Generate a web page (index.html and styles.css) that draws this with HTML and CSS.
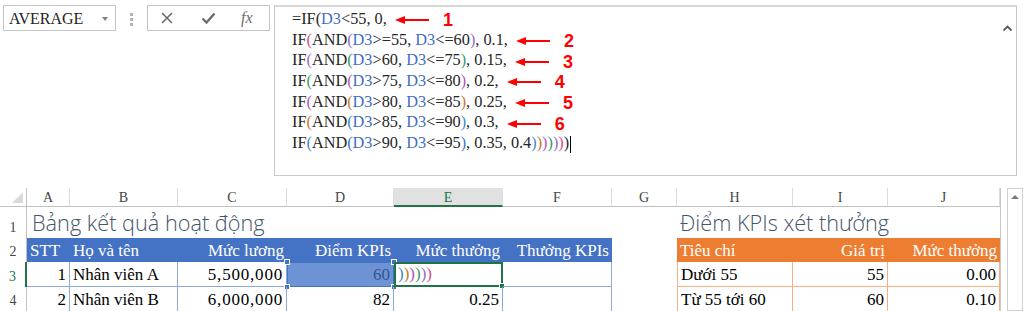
FILE: index.html
```html
<!DOCTYPE html>
<html>
<head>
<meta charset="utf-8">
<link rel="stylesheet" href="styles.css">
</head>
<body>

<!-- formula bar -->
<div class="topbar">
  <div class="namebox"><span>AVERAGE</span><span class="caret"></span></div>
  <div class="grip"><i></i><i></i><i></i></div>
  <div class="fnbox">
    <svg class="ic-x" width="12" height="12" viewBox="0 0 12 12"><path d="M1 1 L11 11 M11 1 L1 11" stroke="#6d6d6d" stroke-width="1.6" fill="none"/></svg>
    <svg class="ic-ok" width="15" height="12" viewBox="0 0 15 12"><path d="M1.5 6.5 L5.5 10.5 L13.5 1.5" stroke="#6d6d6d" stroke-width="2.4" fill="none"/></svg>
    <span class="fx">fx</span>
  </div>
  <div class="formula">
    <div class="flines">
      <div class="fline">=IF<span class="k0">(</span><span class="ref">D3</span>&lt;55, 0, <span class="arr"><svg width="34" height="10" viewBox="0 0 34 10"><polygon points="0,5 10,1 10,9" fill="#f00"/><line x1="8" y1="5" x2="34" y2="5" stroke="#f00" stroke-width="2"/></svg></span><span class="num">1</span></div>
      <div class="fline">IF<span class="k1">(</span>AND<span class="k2">(</span><span class="ref">D3</span>&gt;=55, <span class="ref">D3</span>&lt;=60<span class="k2">)</span>, 0.1, <span class="arr"><svg width="34" height="10" viewBox="0 0 34 10"><polygon points="0,5 10,1 10,9" fill="#f00"/><line x1="8" y1="5" x2="34" y2="5" stroke="#f00" stroke-width="2"/></svg></span><span class="num">2</span></div>
      <div class="fline">IF<span class="k2">(</span>AND<span class="k3">(</span><span class="ref">D3</span>&gt;60, <span class="ref">D3</span>&lt;=75<span class="k3">)</span>, 0.15, <span class="arr"><svg width="34" height="10" viewBox="0 0 34 10"><polygon points="0,5 10,1 10,9" fill="#f00"/><line x1="8" y1="5" x2="34" y2="5" stroke="#f00" stroke-width="2"/></svg></span><span class="num">3</span></div>
      <div class="fline">IF<span class="k3">(</span>AND<span class="k4">(</span><span class="ref">D3</span>&gt;75, <span class="ref">D3</span>&lt;=80<span class="k4">)</span>, 0.2, <span class="arr"><svg width="34" height="10" viewBox="0 0 34 10"><polygon points="0,5 10,1 10,9" fill="#f00"/><line x1="8" y1="5" x2="34" y2="5" stroke="#f00" stroke-width="2"/></svg></span><span class="num">4</span></div>
      <div class="fline">IF<span class="k4">(</span>AND<span class="k5">(</span><span class="ref">D3</span>&gt;80, <span class="ref">D3</span>&lt;=85<span class="k5">)</span>, 0.25, <span class="arr"><svg width="34" height="10" viewBox="0 0 34 10"><polygon points="0,5 10,1 10,9" fill="#f00"/><line x1="8" y1="5" x2="34" y2="5" stroke="#f00" stroke-width="2"/></svg></span><span class="num">5</span></div>
      <div class="fline">IF<span class="k5">(</span>AND<span class="k6">(</span><span class="ref">D3</span>&gt;85, <span class="ref">D3</span>&lt;=90<span class="k6">)</span>, 0.3, <span class="arr"><svg width="34" height="10" viewBox="0 0 34 10"><polygon points="0,5 10,1 10,9" fill="#f00"/><line x1="8" y1="5" x2="34" y2="5" stroke="#f00" stroke-width="2"/></svg></span><span class="num">6</span></div>
      <div class="fline">IF<span class="k6">(</span>AND<span class="k7">(</span><span class="ref">D3</span>&gt;90, <span class="ref">D3</span>&lt;=95<span class="k7">)</span>, 0.35, 0.4<span class="k6">)</span><span class="k5">)</span><span class="k4">)</span><span class="k3">)</span><span class="k2">)</span><span class="k1">)</span><span class="k0">)</span><span class="cursor"></span></div>
    </div>
    <div class="fscroll">
      <svg width="9" height="6" viewBox="0 0 9 6"><path d="M0.5 5.5 L4.5 1.5 L8.5 5.5" stroke="#555" stroke-width="1.8" fill="none"/></svg>
    </div>
  </div>
</div>

<!-- sheet -->
<div class="sheet">
  <div class="grid">
    <!-- column headers -->
    <div class="ch corner"><span class="tri"></span></div>
    <div class="ch">A</div>
    <div class="ch">B</div>
    <div class="ch">C</div>
    <div class="ch">D</div>
    <div class="ch ch-sel">E</div>
    <div class="ch">F</div>
    <div class="ch">G</div>
    <div class="ch">H</div>
    <div class="ch">I</div>
    <div class="ch">J</div>

    <!-- row 1 -->
    <div class="rh">1</div>
    <div class="title span6">Bảng kết quả hoạt động</div>
    <div class="c"></div>
    <div class="title span3">Điểm KPIs xét thưởng</div>

    <!-- row 2 -->
    <div class="rh">2</div>
    <div class="c hb">STT</div>
    <div class="c hb">Họ và tên</div>
    <div class="c hb r">Mức lương</div>
    <div class="c hb r">Điểm KPIs</div>
    <div class="c hb r">Mức thưởng</div>
    <div class="c hb r">Thưởng KPIs</div>
    <div class="c"></div>
    <div class="c ho">Tiêu chí</div>
    <div class="c ho r">Giá trị</div>
    <div class="c ho r">Mức thưởng</div>

    <!-- row 3 -->
    <div class="rh rh-sel">3</div>
    <div class="c bb r row3">1</div>
    <div class="c bb row3">Nhân viên A</div>
    <div class="c bb r row3 money">5,500,000</div>
    <div class="c bb r row3 refcell">60<i class="hd tl"></i><i class="hd bl"></i><i class="hd tr"></i><i class="hd br"></i></div>
    <div class="c row3 active"><span class="k6">)</span><span class="k5">)</span><span class="k4">)</span><span class="k3">)</span><span class="k2">)</span><span class="k1">)</span><i class="fill"></i></div>
    <div class="c bb row3"></div>
    <div class="c"></div>
    <div class="c ob obl orow3">Dưới 55</div>
    <div class="c ob r orow3">55</div>
    <div class="c ob r orow3">0.00</div>

    <!-- row 4 -->
    <div class="rh">4</div>
    <div class="c bb r">2</div>
    <div class="c bb">Nhân viên B</div>
    <div class="c bb r money">6,000,000</div>
    <div class="c bb r">82</div>
    <div class="c bb r">0.25</div>
    <div class="c bb"></div>
    <div class="c"></div>
    <div class="c ob obl">Từ 55 tới 60</div>
    <div class="c ob r">60</div>
    <div class="c ob r">0.10</div>
  </div>
  <div class="vscroll"><span class="up"></span></div>
</div>

</body>
</html>
```

FILE: styles.css
```css
* {
  box-sizing: border-box;
}
body {
  margin: 0;
  width: 1024px;
  height: 311px;
  overflow: hidden;
  background: #fff;
  font-family: "Liberation Serif", "Times New Roman", serif;
  color: #000;
}

/* ---- formula bar ---- */
.topbar {
  display: flex;
  align-items: flex-start;
  padding: 5px 0 0 3px;
}
.namebox {
  width: 113px;
  height: 26px;
  border: 1px solid #c6c6c6;
  display: flex;
  align-items: center;
  justify-content: space-between;
  padding: 1px 7px 0 5px;
  font-size: 16px;
  color: #222;
}
.caret {
  width: 0;
  height: 0;
  border-left: 3.5px solid transparent;
  border-right: 3.5px solid transparent;
  border-top: 4px solid #808080;
}
.grip {
  margin: 8px 0 0 14px;
  display: flex;
  flex-direction: column;
  gap: 2px;
}
.grip i {
  display: block;
  width: 3px;
  height: 3px;
  background: #b4b4b4;
}
.fnbox {
  margin-left: 14px;
  width: 123px;
  height: 26px;
  border: 1px solid #c6c6c6;
  display: flex;
  align-items: center;
  padding-left: 13px;
}
.ic-ok {
  margin-left: 28px;
}
.fx {
  margin-left: 25px;
  font-style: italic;
  font-size: 16px;
  color: #6d6d6d;
}
.formula {
  margin-left: 4px;
  width: 743px;
  height: 171px;
  border: 1px solid #c8c8c8;
  border-top: 2px solid #d6d6d6;
  display: flex;
}
.flines {
  flex: 1;
  padding: 2px 0 0 17px;
  font-size: 16.3px;
  color: #262626;
}
.fline {
  height: 20.7px;
  line-height: 20.7px;
  white-space: nowrap;
}
.ref { color: #3f6fc4; }
.k0 { color: #262626; }
.k1 { color: #cf4f8b; }
.k2 { color: #9a6ac6; }
.k3 { color: #3b9a5c; }
.k4 { color: #ae58b4; }
.k5 { color: #c8772f; }
.k6 { color: #3d8ac9; }
.k7 { color: #3a78cc; }
.arr {
  display: inline-block;
  vertical-align: middle;
  margin-left: 4px;
  line-height: 0;
}
.num {
  display: inline-block;
  margin-left: 14px;
  font-family: "Liberation Sans", Arial, sans-serif;
  font-weight: bold;
  font-size: 18px;
  color: #f00;
  vertical-align: middle;
  line-height: 18px;
}
.cursor {
  display: inline-block;
  width: 1px;
  height: 17px;
  background: #000;
  margin-left: 1px;
  vertical-align: middle;
}
.fscroll {
  width: 18px;
  background: #fff;
  display: flex;
  justify-content: center;
  padding-top: 18px;
}

/* ---- sheet ---- */
.sheet {
  margin-top: 12px;
  display: flex;
}
.grid {
  display: grid;
  grid-template-columns: 27px 43px 108px 109px 107px 109px 109px 65px 116px 95px 112px;
  grid-template-rows: 19px 31px 24px 25px 24px;
  width: 1001px;
  border-right: 1px solid #c8c8c8;
}
.ch {
  border-right: 1px solid #dcdcdc;
  border-bottom: 1px solid #c0c0c0;
  text-align: center;
  font-size: 14px;
  line-height: 19px;
  color: #444;
}
.corner {
  position: relative;
  border-right: 1px solid #c0c0c0;
}
.tri {
  position: absolute;
  right: 3px;
  bottom: 3px;
  width: 0;
  height: 0;
  border-left: 11px solid transparent;
  border-bottom: 11px solid #dadada;
}
.ch-sel {
  background: #e1e1e1;
  color: #217346;
  border-bottom: 2px solid #217346;
}
.rh {
  border-right: 1px solid #c0c0c0;
  display: flex;
  align-items: flex-end;
  justify-content: center;
  padding-bottom: 2px;
  font-size: 14px;
  color: #444;
}
.rh-sel {
  color: #217346;
  border-right: 2px solid #217346;
}
.c {
  display: flex;
  align-items: flex-end;
  padding: 0 3px 1px 3px;
  font-size: 17px;
  white-space: nowrap;
  position: relative;
}
.c.r {
  justify-content: flex-end;
}
.money {
  letter-spacing: 0.8px;
}
.title {
  display: flex;
  align-items: flex-end;
  padding: 0 0 1px 5px;
  font-family: "Open Sans", "Noto Sans", sans-serif;
  font-weight: 300;
  font-size: 21.7px;
  color: #44546a;
  white-space: nowrap;
}
.span6 { grid-column: span 6; }
.span3 { grid-column: span 3; padding-left: 3px; }

.hb {
  background: #4472c4;
  color: #fff;
}
.ho {
  background: #ed7d31;
  color: #fff;
}
.bb {
  border-right: 1px solid #8eaadb;
}
.row3 {
  border-bottom: 1px solid #8eaadb;
}
.ob {
  border-right: 1px solid #f4b084;
}
.obl {
  border-left: 1px solid #f4b084;
}
.orow3 {
  border-bottom: 1px solid #f4b084;
}
.refcell {
  background: #6e93d5;
  color: #34568f;
  border: 1px solid #4472c4;
}
.hd {
  position: absolute;
  width: 6px;
  height: 6px;
  background: #4472c4;
  border: 1px solid #fff;
}
.hd.tl { left: -4px; top: -4px; }
.hd.bl { left: -4px; bottom: -4px; }
.hd.tr { right: -4px; top: -4px; }
.hd.br { right: -4px; bottom: -4px; }
.active {
  border: 2px solid #217346;
  padding-left: 2px;
  justify-content: flex-start;
}
.fill {
  position: absolute;
  right: -4px;
  bottom: -4px;
  width: 6px;
  height: 6px;
  background: #217346;
  border: 1px solid #fff;
}
.vscroll {
  margin-left: 6px;
  width: 16px;
  height: 123px;
  border: 1px solid #d0d0d0;
  display: flex;
  justify-content: center;
  padding-top: 6px;
}
.up {
  width: 0;
  height: 0;
  border-left: 4px solid transparent;
  border-right: 4px solid transparent;
  border-bottom: 4px solid #7a7a7a;
}
```
